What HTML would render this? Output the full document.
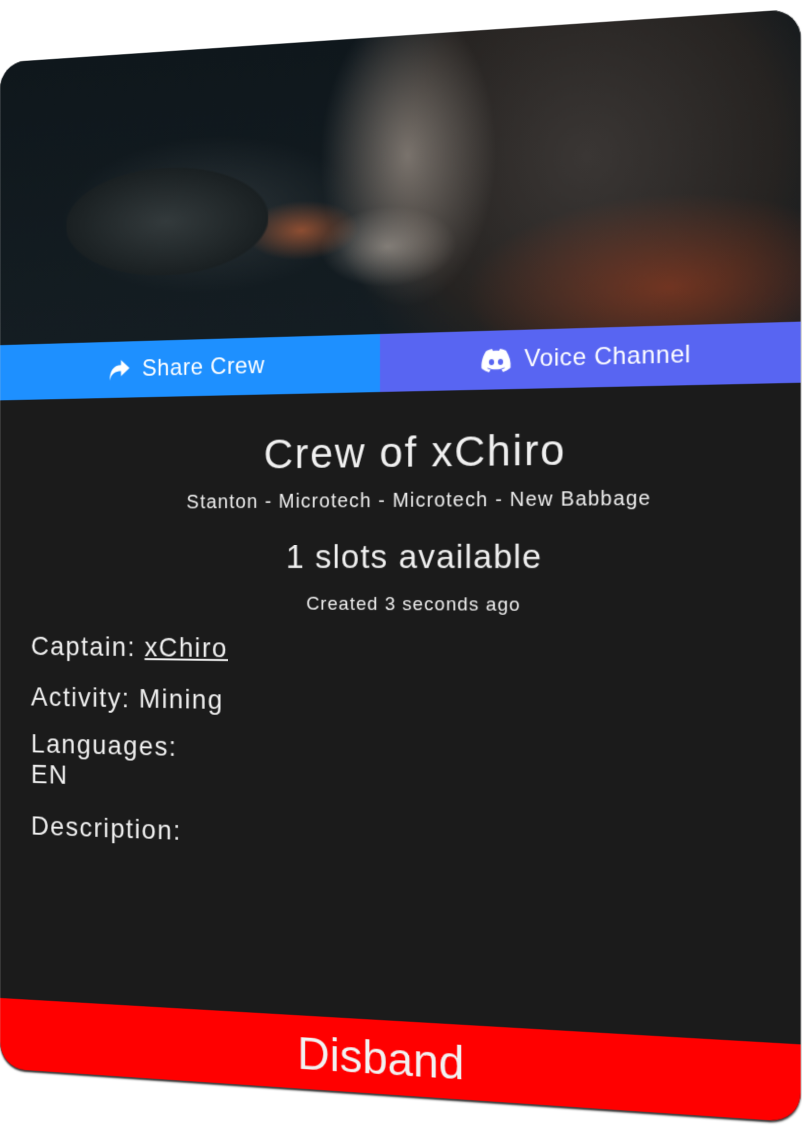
<!DOCTYPE html>
<html><head><meta charset="utf-8"><style>
html,body{margin:0;padding:0;width:802px;height:1126px;overflow:hidden;background:#fff;font-family:"Liberation Sans",sans-serif}
.stage{position:absolute;left:0;top:0;width:802px;height:1126px;perspective:2000px;perspective-origin:380px 565px}
.card{position:absolute;left:-32px;top:36.5px;width:824px;height:1057px;border-radius:28px;overflow:hidden;background:#1b1b1b;transform:rotateY(-14.3deg);transform-origin:50% 50%;box-shadow:0 2px 2px rgba(0,0,0,.8)}
.img{position:absolute;left:0;top:0;width:824px;height:297px;background:
radial-gradient(ellipse 60px 30px at 330px 190px,rgba(255,120,60,.5),transparent),
radial-gradient(ellipse 90px 150px at 440px 120px,rgba(190,180,170,.55),transparent),
radial-gradient(ellipse 70px 40px at 420px 210px,rgba(200,190,180,.5),transparent),
radial-gradient(ellipse 200px 90px at 700px 260px,rgba(200,70,30,.45),transparent),
radial-gradient(ellipse 260px 260px at 620px 130px,#3a3634,#262321 70%,transparent),
radial-gradient(ellipse 160px 80px at 230px 170px,#2c3438,transparent),
linear-gradient(#0f171c,#141d22)}
.ship{position:absolute;left:75px;top:120px;width:220px;height:110px;background:radial-gradient(ellipse at 50% 50%,#333a3c,#1a2022 70%,transparent 72%)}
.btns{position:absolute;left:0;top:297px;width:824px;height:58px;display:flex}
.b{flex:1;display:flex;align-items:center;justify-content:center;color:#fff;font-size:24px;letter-spacing:.6px;gap:13px}
.share{background:#1e90ff}.voice{background:#5865f2}
.c{position:absolute;left:0;width:824px;text-align:center;color:#f0f0f0;padding-left:66px;box-sizing:border-box}
.l{position:absolute;left:35px;color:#f0f0f0;font-size:28px;letter-spacing:1.6px}
.dis{position:absolute;left:0;top:983px;width:824px;height:74px;background:#ff0000;color:#f2f2f2;font-size:47px;display:flex;align-items:center;justify-content:center}
</style></head><body>
<div class="stage"><div class="card">
<div class="img"><div class="ship"></div></div>
<div class="btns">
<div class="b share"><svg width="25" height="23" viewBox="0 0 24 22"><path d="M14 1 L23 9 L14 17 L14 12 C8 12 4 14 2 21 C2 12 6 6 14 6 Z" fill="#fff"/></svg>Share Crew</div>
<div class="b voice"><svg width="30" height="23" viewBox="0 0 30 23"><path d="M25 2 C23 1 21 0.5 19 0 L18 2 C16 1.7 14 1.7 12 2 L11 0 C9 0.5 7 1 5 2 C1 8 0 14 0.5 19 C3 21 5.5 22 8 23 L9.5 20.5 C8 20 7 19.5 6 19 L6.8 18.4 C12 21 18 21 23.2 18.4 L24 19 C23 19.5 22 20 20.5 20.5 L22 23 C24.5 22 27 21 29.5 19 C30 13 28.5 7.5 25 2 Z" fill="#fff"/><ellipse cx="10.5" cy="13" rx="2.6" ry="2.9" fill="#5865f2"/><ellipse cx="19.5" cy="13" rx="2.6" ry="2.9" fill="#5865f2"/></svg>Voice Channel</div>
</div>
<div class="c" style="top:392px;font-size:43px;letter-spacing:1.8px">Crew of xChiro</div>
<div class="c" style="top:453px;font-size:20px;letter-spacing:1.2px">Stanton - Microtech - Microtech - New Babbage</div>
<div class="c" style="top:501px;font-size:34px;letter-spacing:1.2px">1 slots available</div>
<div class="c" style="top:557px;font-size:19px;letter-spacing:1.1px">Created 3 seconds ago</div>
<div class="l" style="top:597px">Captain: <u>xChiro</u></div>
<div class="l" style="top:650px">Activity: Mining</div>
<div class="l" style="top:699px">Languages:<br>EN</div>
<div class="l" style="top:785px">Description:</div>
<div class="dis">Disband</div>
</div></div>
</body></html>
